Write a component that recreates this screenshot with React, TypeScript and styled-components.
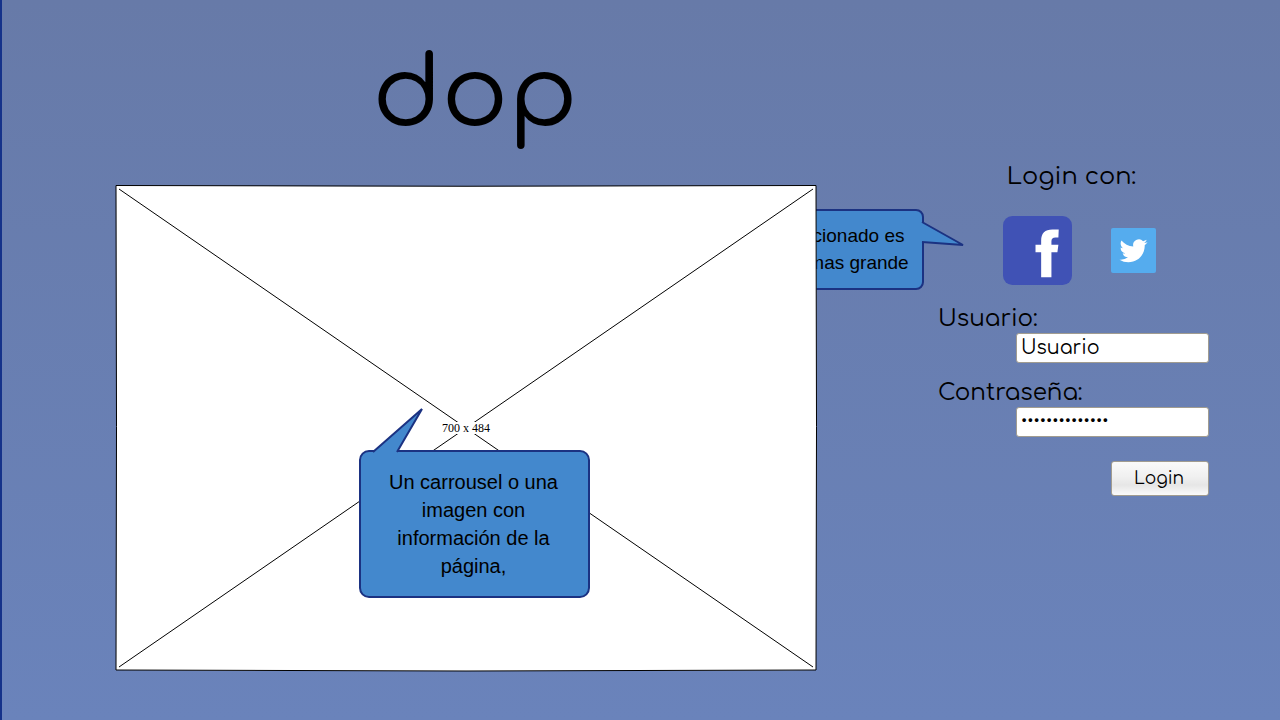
import React from "react";
import styled, { createGlobalStyle } from "styled-components";

const GlobalStyle = createGlobalStyle`
  *, *::before, *::after { box-sizing: border-box; }
  body { margin: 0; }
`;

const rounded = `"Comfortaa", "DejaVu Sans", sans-serif`;
const ink = "#000000";
const navy = "#1b3282";
const callBlue = "#4388cd";

const Page = styled.main`
  min-height: 100vh;
  display: grid;
  grid-template-columns: minmax(0, 1fr) 271px;
  column-gap: 122px;
  align-items: start;
  padding: 35px 71px 48px 114px;
  border-left: 2px solid #15328a;
  background: linear-gradient(#677aa8, #6a83bb);
  color: ${ink};
  font-family: ${rounded};
`;

const Showcase = styled.section`
  display: flex;
  flex-direction: column;
  gap: 30px;
`;

const Logo = styled.h1`
  margin: 0;
  padding-left: 18px;
  font-size: 98px;
  line-height: 120px;
  font-weight: 400;
  text-align: center;
`;

const Figure = styled.figure`
  position: relative;
  isolation: isolate;
  display: grid;
  place-items: center;
  margin: 0;
`;

const Cross = styled.svg`
  grid-area: 1 / 1;
  display: block;
  width: 100%;
  height: auto;
  overflow: visible;
`;

const Dimensions = styled.figcaption`
  grid-area: 1 / 1;
  padding: 0 1px;
  background: #ffffff;
  font: 12px/12px "Liberation Serif", serif;
`;

const Callout = styled.div<{ $behind?: boolean }>`
  position: absolute;
  display: flex;
  align-items: center;
  justify-content: center;
  border: 2px solid ${navy};
  border-radius: ${(p) => (p.$behind ? "8px" : "10px")};
  background: ${callBlue};
  font-family: "Liberation Sans", Arial, sans-serif;
  text-align: center;
  ${(p) =>
    p.$behind
      ? `z-index: -1; top: 24px; right: -108px; width: 131px; height: 81px; padding: 0 0 2px; font-size: 19px; line-height: 27px;`
      : `top: 265px; left: 243px; width: 231px; height: 148px; padding: 0 26px 0 24px; font-size: 20px; line-height: 28px;`}
`;

const CalloutText = styled.p`
  margin: 0;
`;

const Tail = styled.svg<{ $side: "top" | "right" }>`
  position: absolute;
  overflow: visible;
  fill: ${callBlue};
  stroke: ${navy};
  stroke-width: 2;
  ${(p) => (p.$side === "top" ? "left: 12px; top: -44px;" : "left: 126px; top: 10px;")}
`;

const LoginForm = styled.form`
  display: flex;
  flex-direction: column;
  padding-top: 128px;
`;

const Heading = styled.h2`
  margin: 0 0 25px;
  padding-right: 4px;
  font-size: 24px;
  line-height: 28px;
  font-weight: 400;
  text-align: center;
`;

const SocialRow = styled.div`
  display: flex;
  align-items: center;
  gap: 39px;
  margin-bottom: 20px;
  padding-left: 65px;
`;

const SocialButton = styled.button`
  display: block;
  padding: 0;
  border: 0;
  background: none;
  cursor: pointer;

  svg { display: block; }
`;

const Field = styled.div`
  display: flex;
  flex-direction: column;
  margin-bottom: 16px;
`;

const Label = styled.label`
  font-size: 23px;
  line-height: 28px;
`;

const Input = styled.input`
  align-self: flex-end;
  width: 193px;
  height: 30px;
  padding: 0 4px 2px;
  border: 1px solid #a19c90;
  border-radius: 3px;
  background: #ffffff;
  color: ${ink};
  font-family: ${rounded};
  font-size: 19px;
  outline: 0;

  &[type="password"] {
    font-size: 16px;
  }
`;

const Submit = styled.button`
  align-self: flex-end;
  width: 98px;
  height: 35px;
  margin-top: 8px;
  padding: 0 2px 0 0;
  border: 1px solid #a19c90;
  border-radius: 3px;
  background: linear-gradient(#fafafa, #f0f0f0 45%, #e6e6e6 70%, #fafafa);
  color: ${ink};
  font-family: ${rounded};
  font-size: 17px;
  cursor: pointer;
`;

export default function App() {
  return (
    <>
      <GlobalStyle />
      <Page>
        <Showcase>
          <Logo>dop</Logo>
          <Figure>
            <Callout $behind>
              <CalloutText>
                cionado es
                <br />
                mas grande
              </CalloutText>
              <Tail $side="right" width="42" height="26" aria-hidden="true">
                <path d="M1 1 L42 24 L1 21" />
              </Tail>
            </Callout>
            <Cross viewBox="0 0 700 485" aria-hidden="true">
              <path
                d="M0 .5 Q350 2 700 .5 Q701 240 700 485 Q350 487 0 485 Q1 240 0 .5Z"
                fill="#fff"
                stroke="#000"
              />
              <path d="M3 4 L697 482 M697 4 L3 482" stroke="#000" fill="none" />
            </Cross>
            <Dimensions>700 x 484</Dimensions>
            <Callout>
              <CalloutText>Un carrousel o una imagen con información de la página,</CalloutText>
              <Tail $side="top" width="50" height="44" aria-hidden="true">
                <path d="M0 44 L49 1 L24 44" />
              </Tail>
            </Callout>
          </Figure>
        </Showcase>

        <LoginForm onSubmit={(e) => e.preventDefault()}>
          <Heading>Login con:</Heading>
          <SocialRow>
            <SocialButton type="button" aria-label="Facebook">
              <svg width="69" height="69" viewBox="0 0 208 208">
                <rect width="208" height="208" rx="28" fill="#4052b5" />
                <path
                  d="M168 41 L167 65 H158 Q146 65 146 76 V87 H167 L164 109 H146 V185 H115 V109 H98 V87 H115 V74 Q115 41 149 41Z"
                  fill="#fff"
                />
              </svg>
            </SocialButton>
            <SocialButton type="button" aria-label="Twitter">
              <svg width="45" height="45" viewBox="0 0 45 45">
                <rect width="45" height="45" rx="2" fill="#55acee" />
                <path
                  transform="translate(8.5 8.8) scale(1.17)"
                  d="M23.953 4.57a10 10 0 01-2.825.775 4.958 4.958 0 002.163-2.723c-.951.555-2.005.959-3.127 1.184a4.92 4.92 0 00-8.384 4.482C7.69 8.095 4.067 6.13 1.64 3.162a4.822 4.822 0 00-.666 2.475c0 1.71.87 3.213 2.188 4.096a4.904 4.904 0 01-2.228-.616v.06a4.923 4.923 0 003.946 4.827 4.996 4.996 0 01-2.212.085 4.936 4.936 0 004.604 3.417 9.867 9.867 0 01-6.102 2.105c-.39 0-.779-.023-1.17-.067a13.995 13.995 0 007.557 2.209c9.053 0 13.998-7.496 13.998-13.985 0-.21 0-.42-.015-.63A9.935 9.935 0 0024 4.59z"
                  fill="#fff"
                />
              </svg>
            </SocialButton>
          </SocialRow>
          <Field>
            <Label htmlFor="user">Usuario:</Label>
            <Input id="user" type="text" defaultValue="Usuario" />
          </Field>
          <Field>
            <Label htmlFor="pass">Contraseña:</Label>
            <Input id="pass" type="password" defaultValue="contraseña1234" />
          </Field>
          <Submit type="submit">Login</Submit>
        </LoginForm>
      </Page>
    </>
  );
}
